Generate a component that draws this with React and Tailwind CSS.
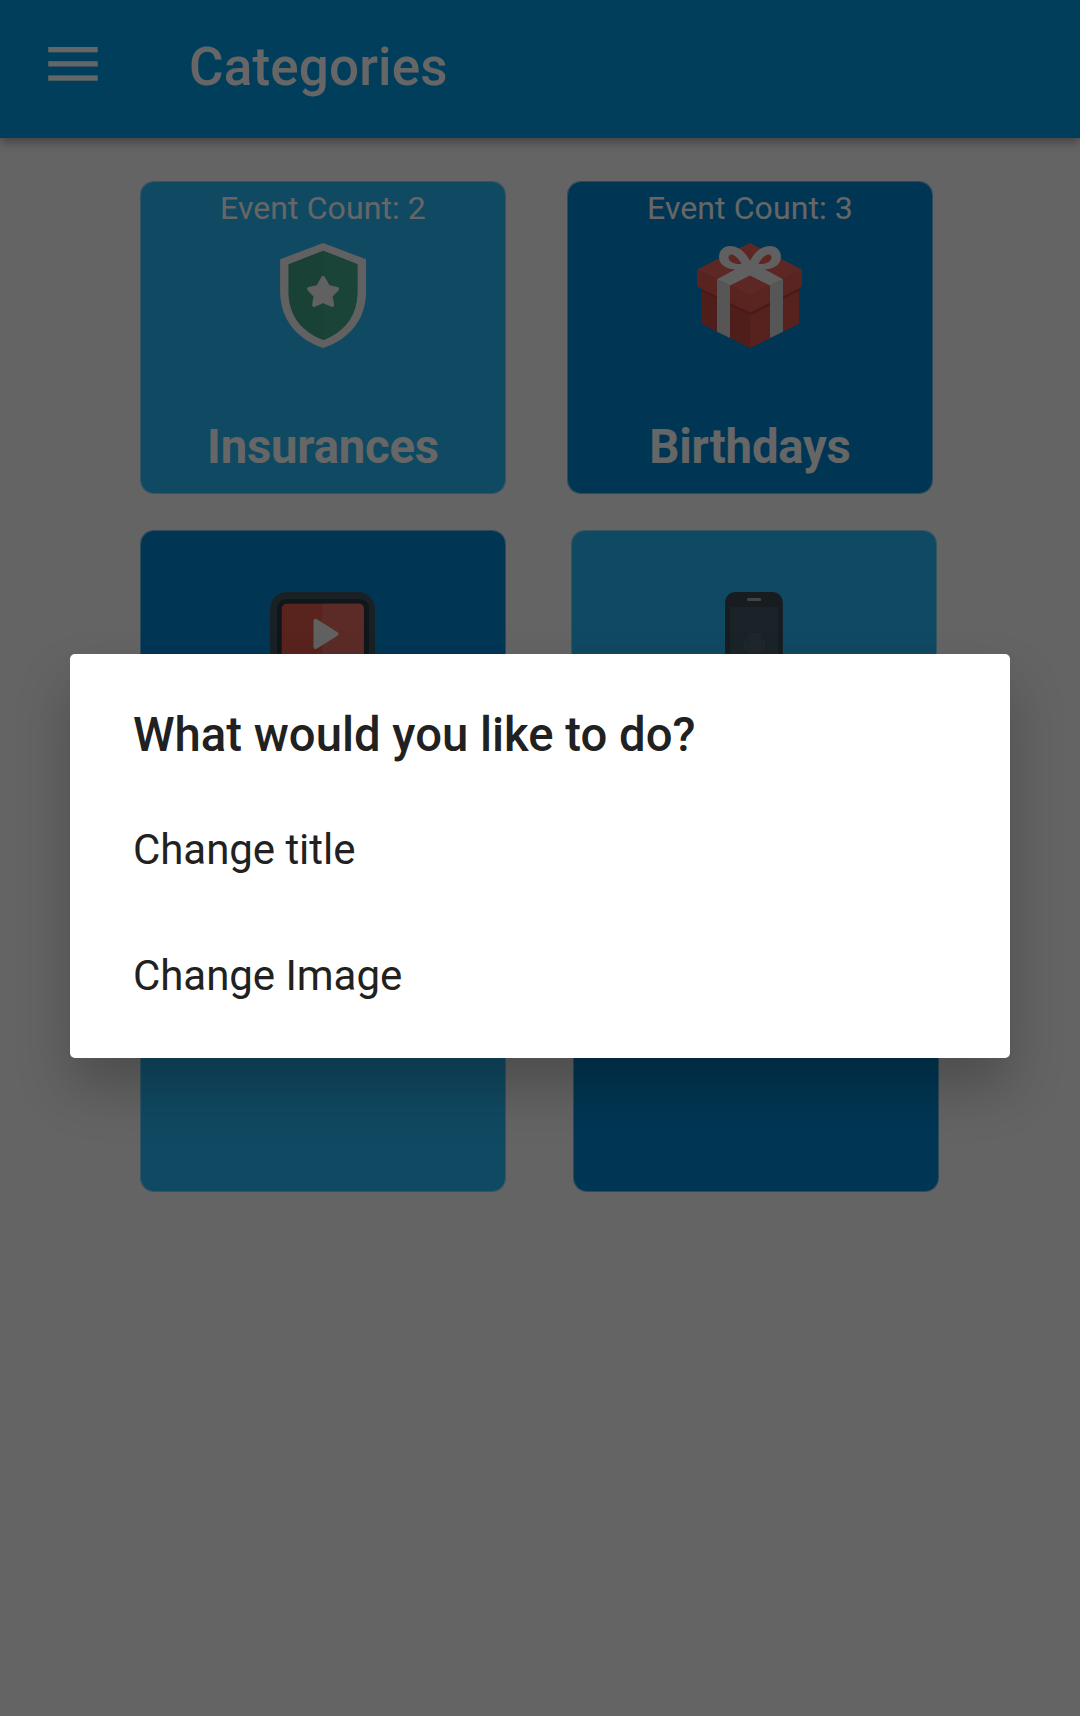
const Menu = () => (
  <svg className="h-[34px] w-[50px]" viewBox="0 0 50 34" fill="#fff">
    <rect x="0.250" width="49.500" height="5.300" />
    <rect x="0.250" y="14.200" width="49.500" height="5.300" />
    <rect x="0.250" y="28.400" width="49.500" height="5.300" />
  </svg>
);

const Shield = () => (
  <svg className="h-[105px] w-[105px]" viewBox="0.4 0 105 105">
    <path d="M52.500 0 95.500 16.300V48C95.500 78 77 97 52.500 105 28 97 9.500 78 9.500 48V16.300Z" fill="#f2f2f2" />
    <path d="M52.500 7.700 86.800 21.300V48C86.800 74 73 89 52.500 97 32 89 17.800 74 17.800 48V21.300Z" fill="#3fa287" />
    <path d="M52.500 7.700 86.800 21.300V48C86.800 74 73 89 52.500 97Z" fill="#42aa8b" />
    <path d="M52.500 35 57.500 44 66.500 46 60 53 61.500 62 52.500 58 43.500 62 45 53 38.500 46 47.500 44Z" fill="#f2f2f2" stroke="#f2f2f2" strokeWidth="4" strokeLinejoin="round" />
  </svg>
);

const Gift = () => (
  <svg className="mr-px h-[105px] w-[105px]" viewBox="0 0 105 105">
    {/* box */}
    <path d="M4 40V80.500L53 105 102 80.500V40Z" fill="#c84b42" />
    <path d="M102 40V80.500L53 105V60Z" fill="#d9564b" />
    <path d="M4 45.500 53 69.500 102 45.500V48L53 72.500 4 48Z" fill="#b3453c" />
    {/* lid */}
    <path d="M0 26.500 53 52V69.500L0 43.500Z" fill="#df574f" />
    <path d="M105 26.500 53 52V69.500L105 43.500Z" fill="#e25b53" />
    <path d="M53 0 105 26.500 53 52 0 26.500Z" fill="#e9625b" />
    {/* ribbon */}
    <path d="M20 36.300 33 42.600V95L20 88.700ZM86 36.300 73 42.600V95L86 88.700Z" fill="#d6d6d6" />
    <path d="M20 36.300 38 26.500 53 19 68 26.500 86 36.300 73 42.600 53 32.500 33 42.600Z" fill="#f0f0f0" />
    <path fillRule="evenodd" d="M53 18C49 10 42 3 33 3 26 3 22 8 22 14 22 22 30 26.500 40 26.500L53 25ZM44.500 21C41 14 37 11.500 34 11.500 31 12 31 16 33 18 36 20.500 40 21.300 44.500 21Z" fill="#f0f0f0" />
    <path fillRule="evenodd" d="M53 18C57 10 64 3 73 3 80 3 84 8 84 14 84 22 76 26.500 66 26.500L53 25ZM61.500 21C65 14 69 11.500 72 11.500 75 12 75 16 73 18 70 20.500 66 21.300 61.500 21Z" fill="#f0f0f0" />
  </svg>
);

const Tablet = () => (
  <svg className="mr-px h-[105px] w-[105px]" viewBox="0 0 105 105">
    <rect width="105" height="105" rx="17" fill="#42545d" />
    <rect x="7" y="7" width="92" height="92" rx="9" fill="#2a3a43" />
    <rect x="11.800" y="11.800" width="82" height="82" rx="5" fill="#df594d" />
    <path d="M52.500 11.800H88.800Q93.800 11.800 93.800 16.800V93H52.500Z" fill="#e66c63" />
    <path d="M45.500 28.700 66.500 42 45.500 55Z" fill="#f2f2f2" stroke="#f2f2f2" strokeWidth="4" strokeLinejoin="round" />
  </svg>
);

const Phone = () => (
  <svg className="h-[105px] w-[105px]" viewBox="0.4 0 105 105">
    <rect x="23.500" width="57.700" height="105" rx="10" fill="#37474f" />
    <rect x="28.500" y="15" width="48" height="75" fill="#425964" />
    <rect x="45.500" y="6" width="14" height="3" rx="1" fill="#a8a8a8" />
    <g fill="#4f636e">
      <path d="M46 47.500C46 43 49 41 53 41S60 43 60 47.500Z" />
      <rect x="46" y="48.500" width="14" height="12" rx="1.500" />
      <rect x="42.500" y="48.500" width="2.700" height="9" rx="1.300" />
      <rect x="60.800" y="48.500" width="2.700" height="9" rx="1.300" />
      <rect x="48.500" y="58" width="3" height="7" rx="1.500" />
      <rect x="54.500" y="58" width="3" height="7" rx="1.500" />
    </g>
    <circle cx="50.500" cy="44.800" r="0.600" fill="#37474f" />
    <circle cx="55.500" cy="44.800" r="0.600" fill="#37474f" />
  </svg>
);

const light = "bg-[#29b6f6] border-[#29b6f6]/55";
const dark = "bg-[#0288d1] border-[#0288d1]/55";

function Card({ tone, count, title, icon }) {
  return (
    <div className={`flex h-[313px] w-[366px] flex-col items-center rounded-[14px] border bg-clip-padding text-white ${tone}`}>
      <p className="mt-[7.500px] h-[37px] text-[32px] leading-[37px] tracking-[0.09px]">{count}</p>
      <div className="mt-[16.500px] h-[105px]">{icon}</div>
      <p className="mt-[71px] text-[47.25px] leading-[56px] font-bold tracking-[-0.2px]">{title}</p>
    </div>
  );
}

export default function App() {
  return (
    <div className="relative h-[1716px] w-[1080px] overflow-hidden bg-[#fafafa] font-[Roboto,sans-serif]">
      <header className="relative flex h-[138px] items-start bg-[#039be5] text-white shadow-[0_4px_10px_rgba(0,0,0,0.35)]">
        <div className="mt-[47px] ml-12">
          <Menu />
        </div>
        <h1 className="mt-[36px] ml-[91px] text-[53px] leading-[62px] font-medium tracking-[0.15px]">Categories</h1>
      </header>

      <main className="flex flex-col gap-[36px] pt-[43px] pl-[140px]">
        <div className="flex gap-[61px]">
          <Card tone={light} count="Event Count: 2" title="Insurances" icon={<Shield />} />
          <Card tone={dark} count="Event Count: 3" title="Birthdays" icon={<Gift />} />
        </div>
        <div className="flex gap-[65px]">
          <Card tone={dark} icon={<Tablet />} />
          <Card tone={light} icon={<Phone />} />
        </div>
        <div className="flex gap-[67px]">
          <Card tone={light} />
          <Card tone={dark} />
        </div>
      </main>

      <div className="absolute inset-0 bg-black/60 pt-[654px]">
        <section className="mx-[70px] h-[404px] rounded-[5px] bg-white px-[63px] pt-[53px] text-[#212121] shadow-[0_30px_54px_rgba(0,0,0,0.23)]">
          <h2 className="text-[47.25px] leading-[56px] font-medium">What would you like to do?</h2>
          <p className="mt-[24px] text-[42px] leading-[126px] tracking-[-0.05px]">Change title</p>
          <p className="text-[42px] leading-[126px] tracking-[-0.05px]">Change Image</p>
        </section>
      </div>
    </div>
  );
}
